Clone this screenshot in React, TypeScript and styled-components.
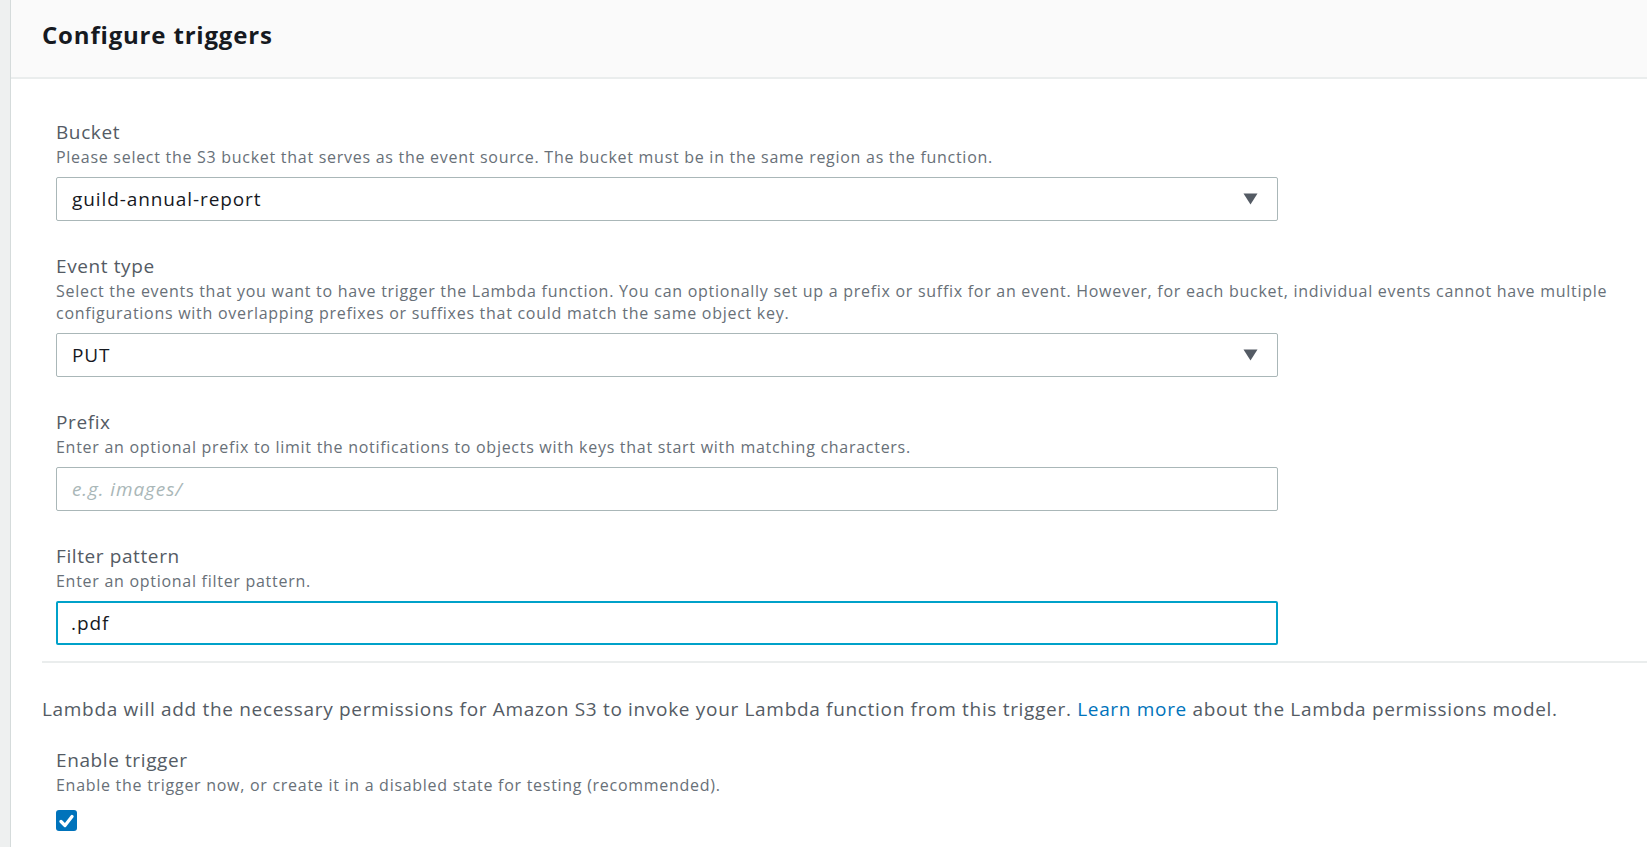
import React from "react";
import styled, { createGlobalStyle } from "styled-components";

const Global = createGlobalStyle`
  html, body { margin: 0; padding: 0; background: #ffffff; }
  body { font-family: "Open Sans", Roboto, Arial, sans-serif; -webkit-font-smoothing: antialiased; }
  * { box-sizing: border-box; }
`;

const Page = styled.div`
  display: flex;
  min-height: 847px;
  width: 1647px;
  overflow: hidden;
`;

const SideStrip = styled.div`
  width: 11px;
  flex: none;
  background: #eef0f0;
  border-right: 1px solid #d5dbdb;
`;

const Panel = styled.div`
  flex: 1;
  display: flex;
  flex-direction: column;
  min-width: 0;
`;

const Header = styled.div`
  height: 79px;
  background: #fafafa;
  border-bottom: 2px solid #eaeded;
  display: flex;
  align-items: center;
  padding-left: 31px;
`;

const Title = styled.h2`
  margin: 0;
  font-size: 24px;
  font-weight: 700;
  letter-spacing: 0.82px;
  color: #16191f;
  padding-bottom: 8px;
`;

const Body = styled.div`
  padding: 40px 0 0 31px;
`;

const Fields = styled.div`
  padding-left: 14px;
`;

const Field = styled.div`
  margin-bottom: 32px;
  &:last-child { margin-bottom: 0; }
`;

const Label = styled.div`
  font-size: 19px;
  line-height: 26px;
  letter-spacing: 0.6px;
  color: #545b64;
`;

const Desc = styled.div`
  font-size: 16px;
  line-height: 22px;
  letter-spacing: 0.72px;
  color: #687078;
  margin-top: 1px;
  padding-right: 24px;
`;

const Control = styled.div<{ $focused?: boolean }>`
  margin-top: 9px;
  width: 1222px;
  height: 44px;
  border: ${(p) => (p.$focused ? "2px solid #00a1c9" : "1px solid #aab7b8")};
  border-radius: 2px;
  display: flex;
  align-items: center;
  padding: 0 19px 0 ${(p) => (p.$focused ? "13px" : "15px")};
  background: #fff;
`;

const ControlText = styled.span`
  flex: 1;
  font-size: 19px;
  letter-spacing: 0.9px;
  color: #16191f;
`;

const TextInput = styled.input`
  flex: 1;
  border: none;
  outline: none;
  padding: 0;
  font-family: inherit;
  font-size: 19px;
  letter-spacing: 0.9px;
  color: #16191f;
  background: transparent;
  &::placeholder {
    color: #aab7b8;
    font-style: italic;
  }
`;

const Separator = styled.div`
  height: 2px;
  background: #eaeded;
  margin-top: 16px;
`;

const Notice = styled.p`
  margin: 34px 0 0 0;
  font-size: 19px;
  line-height: 24px;
  letter-spacing: 0.68px;
  color: #545b64;
`;

const Link = styled.a`
  color: #0073bb;
  text-decoration: none;
`;

const TriggerBlock = styled.div`
  padding: 26px 0 0 14px;
`;

const CheckBox = styled.div`
  margin-top: 14px;
  width: 21px;
  height: 21px;
  border-radius: 3px;
  background: #0073bb;
  display: flex;
  align-items: center;
  justify-content: center;
`;

const Caret = () => (
  <svg width="15" height="12" viewBox="0 0 15 12">
    <path d="M0.5 0.5 H14.5 L7.5 11.5 Z" fill="#545b64" />
  </svg>
);

const Check = () => (
  <svg width="15" height="14" viewBox="0 0 15 14">
    <path d="M2 7.5 L6 11.5 L13 2.5" fill="none" stroke="#fff" strokeWidth="3.2" strokeLinecap="round" strokeLinejoin="round" />
  </svg>
);

export default function App() {
  return (
    <>
      <Global />
      <Page>
        <SideStrip />
        <Panel>
          <Header>
            <Title>Configure triggers</Title>
          </Header>
          <Body>
            <Fields>
              <Field>
                <Label>Bucket</Label>
                <Desc>Please select the S3 bucket that serves as the event source. The bucket must be in the same region as the function.</Desc>
                <Control>
                  <ControlText>guild-annual-report</ControlText>
                  <Caret />
                </Control>
              </Field>
              <Field>
                <Label>Event type</Label>
                <Desc>
                  Select the events that you want to have trigger the Lambda function. You can optionally set up a prefix or suffix for an event. However, for each bucket, individual events cannot have multiple configurations with overlapping prefixes or suffixes that could match the same object key.
                </Desc>
                <Control>
                  <ControlText>PUT</ControlText>
                  <Caret />
                </Control>
              </Field>
              <Field>
                <Label>Prefix</Label>
                <Desc>Enter an optional prefix to limit the notifications to objects with keys that start with matching characters.</Desc>
                <Control>
                  <TextInput placeholder="e.g. images/" />
                </Control>
              </Field>
              <Field>
                <Label>Filter pattern</Label>
                <Desc>Enter an optional filter pattern.</Desc>
                <Control $focused>
                  <TextInput defaultValue=".pdf" />
                </Control>
              </Field>
            </Fields>
            <Separator />
            <Notice>
              Lambda will add the necessary permissions for Amazon S3 to invoke your Lambda function from this trigger.{" "}
              <Link href="#">Learn more</Link> about the Lambda permissions model.
            </Notice>
            <TriggerBlock>
              <Label>Enable trigger</Label>
              <Desc>Enable the trigger now, or create it in a disabled state for testing (recommended).</Desc>
              <CheckBox>
                <Check />
              </CheckBox>
            </TriggerBlock>
          </Body>
        </Panel>
      </Page>
    </>
  );
}
